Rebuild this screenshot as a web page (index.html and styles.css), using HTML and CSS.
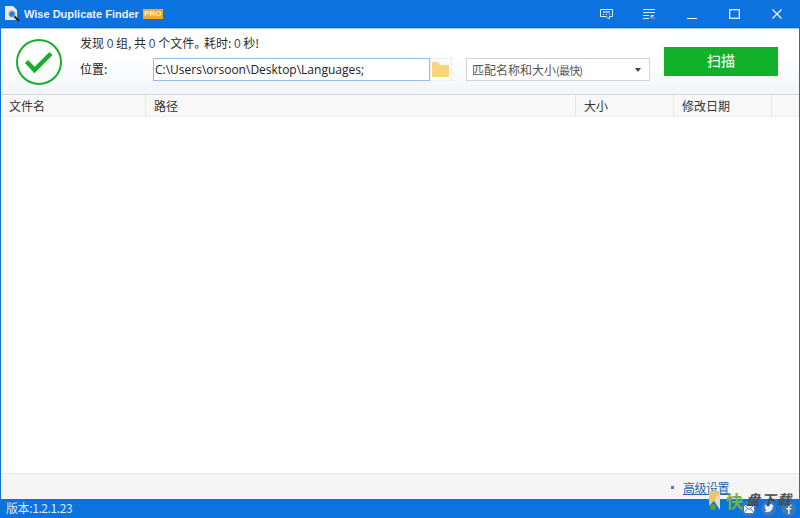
FILE: index.html
```html
<!DOCTYPE html>
<html lang="zh-CN">
<head>
    <meta charset="UTF-8">
    <title>Wise Duplicate Finder</title>
    <link rel="stylesheet" href="styles.css">
</head>
<body>
    <div class="window">
        <header class="titlebar">
            <svg class="app-icon" width="17" height="17" viewBox="0 0 17 17">
                <path d="M1 1h8l4 4v10H1z" fill="#eceae2"/>
                <circle cx="8" cy="9" r="3.500" fill="#2f7fc4" stroke="#c6d8e6" stroke-width="1.300"/>
                <path d="M10.500 11.500l4.500 4.500" stroke="#1b1b1b" stroke-width="2"/>
            </svg>
            <span class="app-name">Wise Duplicate Finder</span>
            <span class="pro">PRO</span>
            <div class="win-buttons">
                <svg class="win-btn" width="13" height="10" viewBox="0 0 13 10" fill="none" stroke="#dcebfb">
                    <path d="M.5.500h12v7h-3v2h-1.500l-1.500-2H.5z"/>
                    <path d="M3 3h7M3 5.500h1M6 5.500h1M9 5.500h1" stroke="#fff"/>
                </svg>
                <svg class="win-btn" width="12" height="10" viewBox="0 0 12 10" fill="none" stroke="#dcebfb">
                    <path d="M0 .5h12M0 3.500h12M0 6.500h6M0 9.500h6M8 6l3.500 3.500M8 9.500V6.500h3"/>
                </svg>
                <svg class="win-btn" width="10" height="10" viewBox="0 0 10 10" fill="none" stroke="#fff">
                    <path d="M0 9.500h10"/>
                </svg>
                <svg class="win-btn" width="11" height="10" viewBox="0 0 11 10" fill="none" stroke="#e4effb" stroke-width="1.300">
                    <rect x=".7" y=".7" width="9.600" height="8.600"/>
                </svg>
                <svg class="win-btn" width="10" height="10" viewBox="0 0 10 10" fill="none" stroke="#fff" stroke-width="1.100">
                    <path d="M.5.500l9 9M9.500.500l-9 9"/>
                </svg>
            </div>
        </header>

        <section class="toolbar">
            <svg class="status-icon" width="46" height="46" viewBox="0 0 46 46" fill="none">
                <circle cx="23" cy="23" r="22" stroke="#18ae2d" stroke-width="2"/>
                <path d="M10.500 22.500l8 8.500L35 14.500" stroke="#18ae2d" stroke-width="4.500"/>
            </svg>
            <div class="scan-info">
                <p class="summary">发现 <span class="num">0</span> 组, 共 <span class="num">0</span> 个文件<span class="stop">。</span> 耗时: <span class="num">0</span> 秒!</p>
                <div class="location">
                    <label class="location-label">位置:</label>
                    <div class="path-input">C:\Users\orsoon\Desktop\Languages;</div>
                    <div class="folder-btn">
                        <svg width="17" height="15" viewBox="0 0 17 15">
                            <path d="M0 1q0-1 1-1h5l2 3h8q1 0 1 1v10q0 1-1 1H1q-1 0-1-1z" fill="#fad37e"/>
                        </svg>
                    </div>
                    <div class="match-select">
                        <span class="match-text">匹配名称和大小<span class="tight">(最快)</span></span>
                        <i class="caret"></i>
                    </div>
                </div>
            </div>
            <button class="scan-btn">扫描</button>
        </section>

        <div class="columns">
            <div class="col col-name">文件名</div>
            <div class="col col-path">路径</div>
            <div class="col col-size">大小</div>
            <div class="col col-date">修改日期</div>
            <div class="col col-rest"></div>
        </div>

        <main class="results"></main>

        <div class="options">
            <i class="dot"></i>
            <a class="advanced" href="#">高级设置</a>
        </div>

        <footer class="statusbar">
            <span class="version">版本:1.2.1.23</span>
            <div class="social">
                <span class="social-btn">
                    <svg width="10" height="8" viewBox="0 0 10 8"><rect width="10" height="8" fill="#fff"/><path d="M0 0l5 4.500L10 0M0 8l3.500-4.500M10 8L6.500 3.500" fill="none" stroke="#3d78b8"/></svg>
                </span>
                <span class="social-btn">
                    <svg width="10" height="9" viewBox="0 0 10 9"><path d="M0 7.500q3 1.500 6 0t3-5.500l1-1-1.200.2Q8 0 6.800 0 5 .2 5 2.300 2.500 2.200 1 .5.200 2 1.500 3.300l-1-.2q.2 1.500 1.500 2L1 5.200q.4 1 1.700 1.200-1 .9-2.700 1.100z" fill="#e6f0fb"/></svg>
                </span>
                <span class="social-btn">
                    <svg width="6" height="10" viewBox="0 0 6 10"><path d="M2 10V5.500H.5V4H2V2.500Q2 .5 4 .5h1.500V2H4.500q-1 0-1 1v1h2l-.3 1.500H3.500V10z" fill="#e6f0fb"/></svg>
                </span>
            </div>
        </footer>

        <div class="watermark">
            <svg class="wm-logo" width="13" height="20" viewBox="0 0 13 20">
                <path d="M12 0v19L6 10z" fill="#e8d9b0"/>
                <path d="M1 0h11L6 10l-5 5z" fill="#f2c46a"/>
                <circle cx="5" cy="16" r="3" fill="#5aa13a"/>
            </svg>
            <span class="wm-green">快</span><span class="wm-dark">盘下载</span>
        </div>
    </div>
</body>
</html>
```

FILE: styles.css
```css
* {
    margin: 0;
    padding: 0;
    box-sizing: border-box;
}

html,
body {
    height: 100%;
    overflow: hidden;
}

body {
    font-family: "Noto Sans CJK SC", "Liberation Sans", sans-serif;
    font-size: 12px;
    color: #222;
}

.window {
    position: relative;
    display: flex;
    flex-direction: column;
    height: 518px;
    border-left: 1px solid #0c72e0;
    border-right: 1px solid #0c72e0;
    background: #fff;
}

/* Title bar */
.titlebar {
    display: flex;
    align-items: center;
    height: 28px;
    margin: 0 -1px;
    padding-left: 4px;
    background: #0c72e0;
    border-bottom: 1px solid #0a63c6;
    color: #fff;
}

.app-icon {
    margin-right: 3px;
}

.app-name {
    font-family: "Liberation Sans", sans-serif;
    font-size: 11px;
    font-weight: 700;
    color: #e9f2fc;
}

.pro {
    margin-left: 4px;
    width: 20px;
    height: 10px;
    background: #f3a92b;
    color: #fff3d8;
    font-family: "Liberation Sans", sans-serif;
    font-size: 8px;
    font-weight: 700;
    line-height: 10px;
    text-align: center;
}

.win-buttons {
    display: flex;
    align-items: center;
    margin-left: auto;
    padding-right: 18px;
}

.win-btn:nth-child(1) { margin-right: 30px; }
.win-btn:nth-child(2) { margin-right: 32px; }
.win-btn:nth-child(3) { margin-right: 32px; }
.win-btn:nth-child(4) { margin-right: 32px; }

/* Toolbar */
.toolbar {
    display: flex;
    height: 67px;
    background: linear-gradient(#fff 45%, #f1f4f8);
    border-bottom: 1px solid #d5d6d6;
    border-top: 1px solid #a6cdf5;
}

.status-icon {
    margin: 10px 0 0 15px;
}

.scan-info {
    width: 570px;
    margin-left: 18px;
}

.summary {
    margin-top: 5px;
    height: 18px;
    line-height: 18px;
    font-size: 12px;
    color: #2b2b2b;
}

.num {
    font-family: "Liberation Sans", sans-serif;
    color: #3a4a5c;
}

.stop {
    letter-spacing: -5px;
}

.location {
    display: flex;
    align-items: center;
    margin-top: 6px;
}

.location-label {
    width: 73px;
    margin-top: -2px;
}

.path-input {
    width: 277px;
    height: 23px;
    padding-left: 1px;
    background: #fff;
    border: 1px solid #90bdec;
    font-family: "Open Sans", sans-serif;
    font-size: 12px;
    line-height: 21px;
    color: #222;
}

.folder-btn {
    display: flex;
    align-items: center;
    justify-content: center;
    width: 22px;
    height: 23px;
    padding-right: 1px;
    background: #fbfbfb;
    border: 1px solid #efefef;
}

.match-select {
    display: flex;
    align-items: center;
    justify-content: space-between;
    width: 184px;
    height: 23px;
    margin-left: 14px;
    padding: 0 8px 0 5px;
    background: #fff;
    border: 1px solid #d3d6d8;
    color: #555;
}

.match-text {
    margin-top: -1px;
}

.tight {
    font-size: 11px;
    letter-spacing: -0.800px;
}

.caret {
    border-top: 4px solid #444;
    border-left: 3.500px solid transparent;
    border-right: 3.500px solid transparent;
}

.scan-btn {
    width: 114px;
    height: 29px;
    margin: 18px 0 0 14px;
    padding-bottom: 3px;
    border: none;
    background: #12b12a;
    color: #e8f8ea;
    font-family: "Noto Sans CJK SC", sans-serif;
    font-size: 14px;
    font-weight: 500;
}

/* Result list */
.columns {
    display: flex;
    height: 22px;
    background: #f8f8f8;
    border-bottom: 1px solid #eeeeee;
    line-height: 21px;
    color: #333;
}

.col {
    padding-left: 8px;
    border-right: 1px solid #e6e6e6;
}

.col-name { width: 145px; }
.col-path { width: 430px; }
.col-size { width: 98px; }
.col-date { width: 98px; }
.col-rest { flex: 1; border-right: none; }

.results {
    flex: 1;
    background: #fff;
}

.options {
    display: flex;
    align-items: center;
    justify-content: flex-end;
    height: 26px;
    padding: 2px 70px 0 0;
    background: #f5f5f5;
    border-top: 1px solid #e6e6e4;
}

.dot {
    width: 3px;
    height: 3px;
    margin-right: 9px;
    background: #4a7fb5;
}

.advanced {
    color: #2265ac;
    letter-spacing: -0.500px;
    line-height: 14px;
    text-decoration: underline;
}

/* Status bar */
.statusbar {
    display: flex;
    align-items: center;
    justify-content: space-between;
    height: 19px;
    margin: 0 -1px;
    padding: 0 4px 0 6px;
    background: #0c72e0;
    color: #dcebfb;
}

.version {
    margin-bottom: 2px;
    letter-spacing: -0.400px;
}

.social {
    display: flex;
    gap: 5px;
}

.social-btn {
    display: flex;
    align-items: center;
    justify-content: center;
    width: 15px;
    height: 15px;
    border-radius: 50%;
    background: #3d78b8;
}

/* Site watermark over the corner */
.watermark {
    position: absolute;
    left: 707px;
    top: 491px;
    display: flex;
    align-items: flex-start;
    font-weight: 700;
}

.wm-green {
    margin: 0 3px 0 5px;
    color: #6fb53f;
    font-size: 17px;
    line-height: 20px;
}

.wm-dark {
    color: #4b4b42;
    font-size: 14px;
    font-style: italic;
    line-height: 16px;
    letter-spacing: 1.500px;
}
```
